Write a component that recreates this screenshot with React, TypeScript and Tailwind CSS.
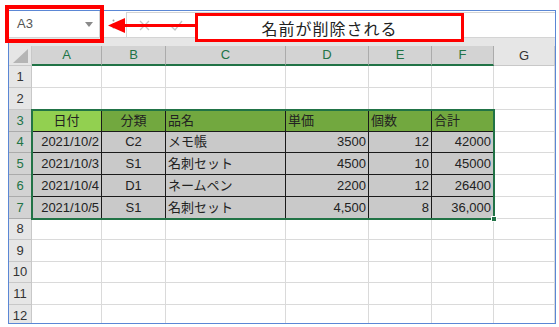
const COLS = ['A', 'B', 'C', 'D', 'E', 'F', 'G']

type Align = 'l' | 'c' | 'r'

const HEAD: string[] = ['日付', '分類', '品名', '単価', '個数', '合計']
const HEAD_ALIGN: Align[] = ['c', 'c', 'l', 'l', 'l', 'l']
const DATA: string[][] = [
  ['2021/10/2', 'C2', 'メモ帳', '3500', '12', '42000'],
  ['2021/10/3', 'S1', '名刺セット', '4500', '10', '45000'],
  ['2021/10/4', 'D1', 'ネームペン', '2200', '12', '26400'],
  ['2021/10/5', 'S1', '名刺セット', '4,500', '8', '36,000'],
]
const DATA_ALIGN: Align[] = ['r', 'c', 'l', 'r', 'r', 'r']

const alignClass = (a: Align) =>
  a === 'c' ? 'justify-center' : a === 'r' ? 'justify-end pr-[2px]' : 'justify-start pl-[2px]'

const font = { fontFamily: '"Liberation Sans", "Noto Sans CJK JP", sans-serif' }

function Cell({ row, col }: { row: number; col: number }) {
  // rows 3..7, cols 0..5 form the table
  if (row >= 3 && row <= 7 && col <= 5) {
    const isHead = row === 3
    const text = isHead ? HEAD[col] : DATA[row - 4][col]
    const align = isHead ? HEAD_ALIGN[col] : DATA_ALIGN[col]
    const bg = isHead ? (col === 0 ? 'bg-[#92d050]' : 'bg-[#72a83f]') : 'bg-[#c9c9c9]'
    return (
      <div
        className={`flex items-center border-r border-b border-[#1a1a1a] ${bg} ${alignClass(align)} text-[13px] text-[#222] whitespace-nowrap overflow-hidden`}
      >
        {text}
      </div>
    )
  }
  return <div className="border-r border-b border-[#dadada] bg-white" />
}

export default function App() {
  const rowNums = Array.from({ length: 12 }, (_, i) => i + 1)

  return (
    <div className="relative w-[559px] h-[327px] bg-white overflow-hidden pl-[8px] pt-[10px]" style={font}>
      {/* Excel window */}
      <div className="w-[548px] h-[314px] border border-[#5b87d5] overflow-hidden flex flex-col">
        {/* Formula bar */}
        <div className="h-[27px] shrink-0 flex items-stretch bg-white border-b border-[#d4d4d4]">
          <div className="w-[91px] mt-[0px] flex items-center justify-between bg-white border-r border-[#d4d4d4] pl-[8px] pr-[6px]">
            <span className="text-[13px] text-[#555]">A3</span>
            <svg width="8" height="5" viewBox="0 0 8 5">
              <path d="M0 0h8L4 5z" fill="#8a8a8a" />
            </svg>
          </div>
          <div className="w-[26px] flex items-center justify-center">
            <svg width="3" height="10" viewBox="0 0 3 10">
              <circle cx="1.5" cy="1.5" r="1" fill="#9a9a9a" />
              <circle cx="1.5" cy="5" r="1" fill="#9a9a9a" />
              <circle cx="1.5" cy="8.5" r="1" fill="#9a9a9a" />
            </svg>
          </div>
          <div className="flex-1 mt-[1px] border-l border-t border-[#d4d4d4] flex items-center gap-[20px] pl-[12px]">
            <svg width="11" height="11" viewBox="0 0 11 11">
              <path d="M1 1l9 9M10 1l-9 9" stroke="#c4c4c4" strokeWidth="1.3" />
            </svg>
            <svg width="13" height="11" viewBox="0 0 13 11">
              <path d="M1 6l4 4 7-9" stroke="#c4c4c4" strokeWidth="1.3" fill="none" />
            </svg>
          </div>
        </div>
        <div className="h-[8px] shrink-0 bg-[#e6e6e6]" />

        {/* Sheet grid */}
        <div
          className="grid grid-cols-[23px_70px_64px_120px_83px_63px_62px_1fr] grid-rows-[20px_22px_22px_22px_21px_22px_22px_22px_21px_22px_21px_22px_22px] bg-white"
        >
          {/* corner */}
          <div className="relative bg-[#e6e6e6] border-r border-b border-[#c8c8c8]">
            <svg className="absolute right-[3px] bottom-[2px]" width="15" height="14" viewBox="0 0 15 14">
              <path d="M15 0V14H0z" fill="#b5b5b5" />
            </svg>
          </div>
          {COLS.map((c, i) => (
            <div
              key={c}
              className={`flex items-center justify-center text-[13px] border-r ${
                i < 6
                  ? 'bg-[#d3d3d3] text-[#217346] border-[#ababab] border-b-2 border-b-[#217346]'
                  : 'bg-[#e6e6e6] text-[#333] border-[#c8c8c8] border-b border-b-[#c8c8c8]'
              }`}
            >
              {c}
            </div>
          ))}

          {rowNums.map((r) => (
            <div key={r} className="contents">
              <div
                className={`flex items-center justify-center text-[13px] border-r border-b ${
                  r >= 3 && r <= 7
                    ? 'bg-[#d3d3d3] text-[#217346] border-[#ababab]'
                    : 'bg-[#e6e6e6] text-[#333] border-[#c8c8c8]'
                }`}
              >
                {r}
              </div>
              {COLS.map((c, ci) => (
                <Cell key={c} row={r} col={ci} />
              ))}
            </div>
          ))}
        </div>
      </div>

      {/* Selection outline A3:F7 */}
      <div className="absolute left-[31px] top-[109px] w-[464px] h-[111px] border-2 border-[#217346] pointer-events-none" />
      <div className="absolute left-[491px] top-[216px] w-[6px] h-[6px] bg-[#217346] border border-white" />

      {/* Annotation: red frame around the name box */}
      <div className="absolute left-[5px] top-[5px] w-[99px] h-[38px] border-4 border-[#ff0000]" />

      {/* Annotation: arrow */}
      <svg className="absolute left-[108px] top-[17px]" width="88" height="17" viewBox="0 0 88 17">
        <path d="M0 8.5L17 1V16z" fill="#ff0000" />
        <rect x="16" y="7" width="72" height="3" fill="#ff0000" />
      </svg>

      {/* Annotation: callout */}
      <div className="absolute left-[195px] top-[13px] w-[269px] h-[29px] border-[3px] border-[#ff0000] bg-white flex items-center justify-center">
        <span className="text-[16px] text-[#222] tracking-[1px]" style={{ fontFamily: '"Noto Sans CJK JP", sans-serif' }}>
          名前が削除される
        </span>
      </div>
    </div>
  )
}
